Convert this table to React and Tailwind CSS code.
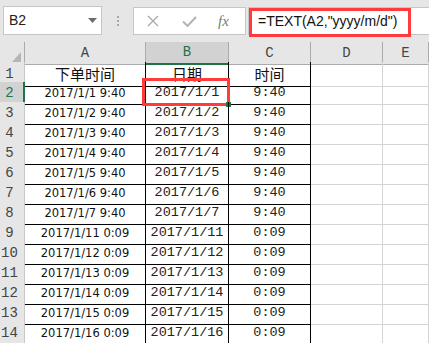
import React from 'react'

const data = [
  ['2017/1/1 9:40', '2017/1/1', '9:40'],
  ['2017/1/2 9:40', '2017/1/2', '9:40'],
  ['2017/1/3 9:40', '2017/1/3', '9:40'],
  ['2017/1/4 9:40', '2017/1/4', '9:40'],
  ['2017/1/5 9:40', '2017/1/5', '9:40'],
  ['2017/1/6 9:40', '2017/1/6', '9:40'],
  ['2017/1/7 9:40', '2017/1/7', '9:40'],
  ['2017/1/11 0:09', '2017/1/11', '0:09'],
  ['2017/1/12 0:09', '2017/1/12', '0:09'],
  ['2017/1/13 0:09', '2017/1/13', '0:09'],
  ['2017/1/14 0:09', '2017/1/14', '0:09'],
  ['2017/1/15 0:09', '2017/1/15', '0:09'],
  ['2017/1/16 0:09', '2017/1/16', '0:09'],
]

const cols = 'grid grid-cols-[25px_121px_83px_82px_72px_1fr]'
const mono = { fontFamily: '"Liberation Mono", monospace' }
const cjk = { fontFamily: '"Noto Sans CJK SC", sans-serif' }

function FormulaBar() {
  return (
    <div className="relative flex h-[42px] items-start bg-[#e6e6e6]">
      <div className="ml-[3px] mt-[6px] flex h-[29px] w-[99px] items-center justify-between border border-[#c6c6c6] bg-white pl-[5px] pr-[4px] text-[14px] text-[#222]">
        <span>B2</span>
        <svg width="9" height="5" viewBox="0 0 9 5">
          <path d="M0 0h9L4.5 5z" fill="#6e6e6e" />
        </svg>
      </div>
      <div className="mt-[16px] flex w-[31px] flex-col items-center gap-[2px]">
        <span className="h-[2px] w-[2px] bg-[#a8a8a8]" />
        <span className="h-[2px] w-[2px] bg-[#a8a8a8]" />
        <span className="h-[2px] w-[2px] bg-[#a8a8a8]" />
      </div>
      <div className="mt-[7px] flex h-[28px] w-[113px] items-center border border-[#c6c6c6] bg-white">
        <svg className="ml-[13px]" width="12" height="12" viewBox="0 0 12 12">
          <path d="M1 1l10 10M11 1L1 11" stroke="#a9a9a9" strokeWidth="1.3" />
        </svg>
        <svg className="ml-[23px]" width="15" height="11" viewBox="0 0 15 11">
          <path d="M1 5.5l4.5 4.5L14 1" stroke="#b3b3b3" strokeWidth="2" fill="none" />
        </svg>
        <span
          className="ml-[21px] text-[15px] italic text-[#7a7a7a]"
          style={{ fontFamily: '"Liberation Serif", serif' }}
        >
          fx
        </span>
      </div>
      <div className="ml-[2px] mt-[7px] flex h-[28px] flex-1 items-center border-y border-l border-[#c6c6c6] bg-white pl-[9px] text-[14px] text-[#111]">
        =TEXT(A2,"yyyy/m/d")
      </div>
      <div className="pointer-events-none absolute left-[249px] top-[8px] h-[29px] w-[162px] border-[3px] border-[#ff3b3b]" />
    </div>
  )
}

function ColumnHeaders() {
  const letters = ['A', 'B', 'C', 'D', 'E']
  return (
    <div className={`${cols} h-[20px]`}>
      <div className="flex items-end justify-end border-b border-r border-[#ababab] bg-[#e6e6e6] pb-[2px] pr-[3px]">
        <svg width="9" height="10" viewBox="0 0 9 10">
          <path d="M9 0v10H0z" fill="#b5b5b5" />
        </svg>
      </div>
      {letters.map((l) => (
        <div
          key={l}
          style={mono}
          className={
            l === 'B'
              ? 'flex items-center justify-center border-b-2 border-r border-b-[#217346] border-r-[#ababab] bg-[#d2d2d2] text-[14px] text-[#217346]'
              : 'flex items-center justify-center border-b border-r border-[#ababab] bg-[#e6e6e6] text-[14px] text-[#444]'
          }
        >
          {l}
        </div>
      ))}
    </div>
  )
}

function RowHeader({ n, active }) {
  return (
    <div
      style={mono}
      className={
        active
          ? 'flex items-center justify-center border-b border-r-2 border-b-[#c8c8c8] border-r-[#217346] bg-[#d2d2d2] pr-[4px] pt-[1px] text-[14px] text-[#217346]'
          : 'flex items-center justify-center border-b border-r border-[#c8c8c8] bg-[#e6e6e6] pr-[5px] pt-[1px] text-[14px] text-[#444]'
      }
    >
      {n}
    </div>
  )
}

const boxed = 'flex items-center justify-center border-b border-r border-black pt-[1px]'
const plain = 'border-b border-r border-[#d4d4d4]'

export default function App() {
  return (
    <div
      className="h-[343px] w-[429px] overflow-hidden bg-white"
      style={{ fontFamily: '"Liberation Sans", Arial, sans-serif' }}
    >
      <FormulaBar />
      <ColumnHeaders />

      <div className={`${cols} h-[20px]`}>
        <RowHeader n={1} />
        <div style={cjk} className={`${boxed} text-[15px] text-[#111]`}>下单时间</div>
        <div style={cjk} className={`${boxed} text-[15px] text-[#111]`}>日期</div>
        <div style={cjk} className={`${boxed} text-[15px] text-[#111]`}>时间</div>
        <div className={plain} />
        <div className={plain} />
      </div>

      {data.map(([stamp, date, time], i) => {
        const n = i + 2
        return (
          <div key={n} className={`${cols} h-[20px]`}>
            <RowHeader n={n} active={n === 2} />
            <div
              className={`${boxed} text-[11.5px] text-[#111]`}
              style={{ fontFamily: '"DejaVu Sans", sans-serif' }}
            >
              {stamp}
            </div>
            <div style={mono} className={`${boxed} relative text-[13.5px] text-[#222]`}>
              {date}
              {n === 2 && (
                <>
                  <span className="absolute -bottom-[2px] -left-[4px] -right-[2px] -top-[4px] border-[3px] border-[#ff3b3b]" />
                  <span className="absolute -bottom-[3px] -right-[3px] h-[5px] w-[5px] bg-[#217346]" />
                </>
              )}
            </div>
            <div style={mono} className={`${boxed} text-[13.5px] text-[#222]`}>{time}</div>
            <div className={plain} />
            <div className={plain} />
          </div>
        )
      })}
    </div>
  )
}
